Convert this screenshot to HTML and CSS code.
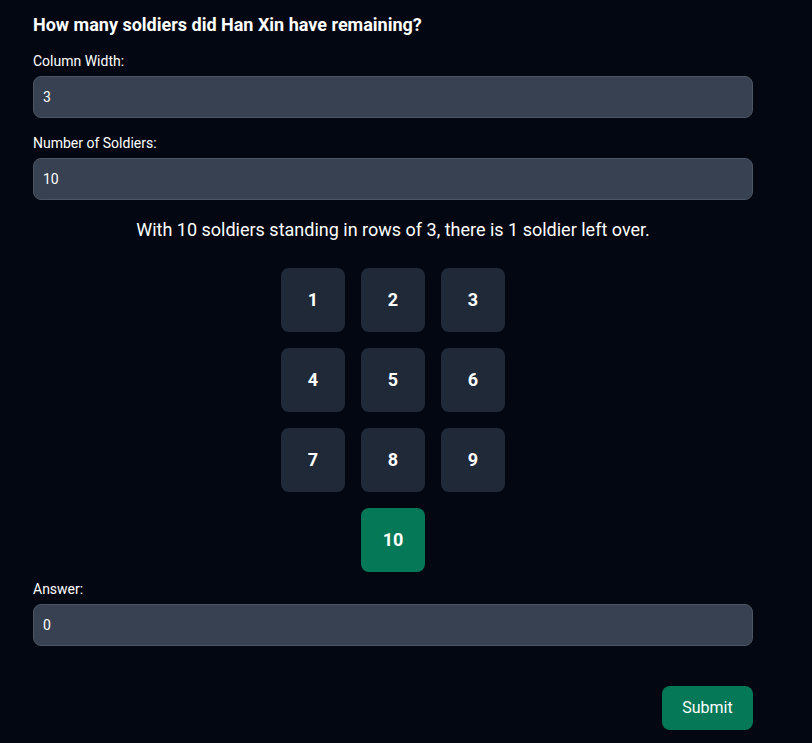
FILE: index.html
```html
<!DOCTYPE html>
<html lang="en">
<head>
<meta charset="utf-8">
<title>Han Xin</title>
<link rel="stylesheet" href="styles.css">
</head>
<body>
<main class="page">
  <h1 class="title">How many soldiers did Han Xin have remaining?</h1>
  <label class="label" for="cw">Column Width:</label>
  <input class="field" id="cw" type="text" value="3">
  <label class="label label-gap" for="ns">Number of Soldiers:</label>
  <input class="field" id="ns" type="text" value="10">
  <p class="sentence">With 10 soldiers standing in rows of 3, there is 1 soldier left over.</p>
  <div class="grid">
    <div class="cell">1</div>
    <div class="cell">2</div>
    <div class="cell">3</div>
    <div class="cell">4</div>
    <div class="cell">5</div>
    <div class="cell">6</div>
    <div class="cell">7</div>
    <div class="cell">8</div>
    <div class="cell">9</div>
    <div class="cell cell-left">10</div>
  </div>
  <label class="label answer-label" for="ans">Answer:</label>
  <input class="field" id="ans" type="text" value="0">
  <div class="actions">
    <button class="submit" type="button">Submit</button>
  </div>
</main>
</body>
</html>
```
FILE: styles.css
```css
html, body {
  margin: 0;
  padding: 0;
  background: #030712;
}
body {
  font-family: Roboto, "Liberation Sans", Arial, sans-serif;
  color: #ffffff;
}
.page {
  width: 720px;
  margin-left: 33px;
  padding-top: 11px;
  display: flex;
  flex-direction: column;
}
.title {
  margin: 0;
  font-size: 18px;
  line-height: 28px;
  font-weight: 700;
  color: #ffffff;
}
.label {
  display: block;
  margin-top: 12px;
  font-size: 14px;
  line-height: 20px;
  color: #ffffff;
}
.label-gap {
  margin-top: 15px;
}
.field {
  box-sizing: border-box;
  margin-top: 5px;
  width: 720px;
  height: 42px;
  padding: 0 9px;
  background: #374151;
  border: 1px solid #4b5563;
  border-radius: 8px;
  color: #ffffff;
  font-family: Roboto, "Liberation Sans", Arial, sans-serif;
  font-size: 14px;
  outline: none;
}
.sentence {
  margin: 16px 0 0;
  text-align: center;
  font-size: 18px;
  line-height: 28px;
  color: #ffffff;
}
.grid {
  align-self: center;
  margin-top: 24px;
  width: 224px;
  display: flex;
  flex-wrap: wrap;
  justify-content: center;
  gap: 16px;
}
.cell {
  width: 64px;
  height: 64px;
  border-radius: 8px;
  background: #1f2937;
  display: flex;
  align-items: center;
  justify-content: center;
  font-size: 18px;
  line-height: 1;
  font-weight: 700;
  color: #ffffff;
}
.cell-left {
  background: #047857;
}
.answer-label {
  margin-top: 7px;
}
.actions {
  display: flex;
  justify-content: flex-end;
  margin-top: 40px;
}
.submit {
  width: 91px;
  height: 44px;
  border: none;
  border-radius: 8px;
  background: #047857;
  color: #ffffff;
  font-family: Roboto, "Liberation Sans", Arial, sans-serif;
  font-size: 16px;
  line-height: 1;
  padding: 0;
}
```
